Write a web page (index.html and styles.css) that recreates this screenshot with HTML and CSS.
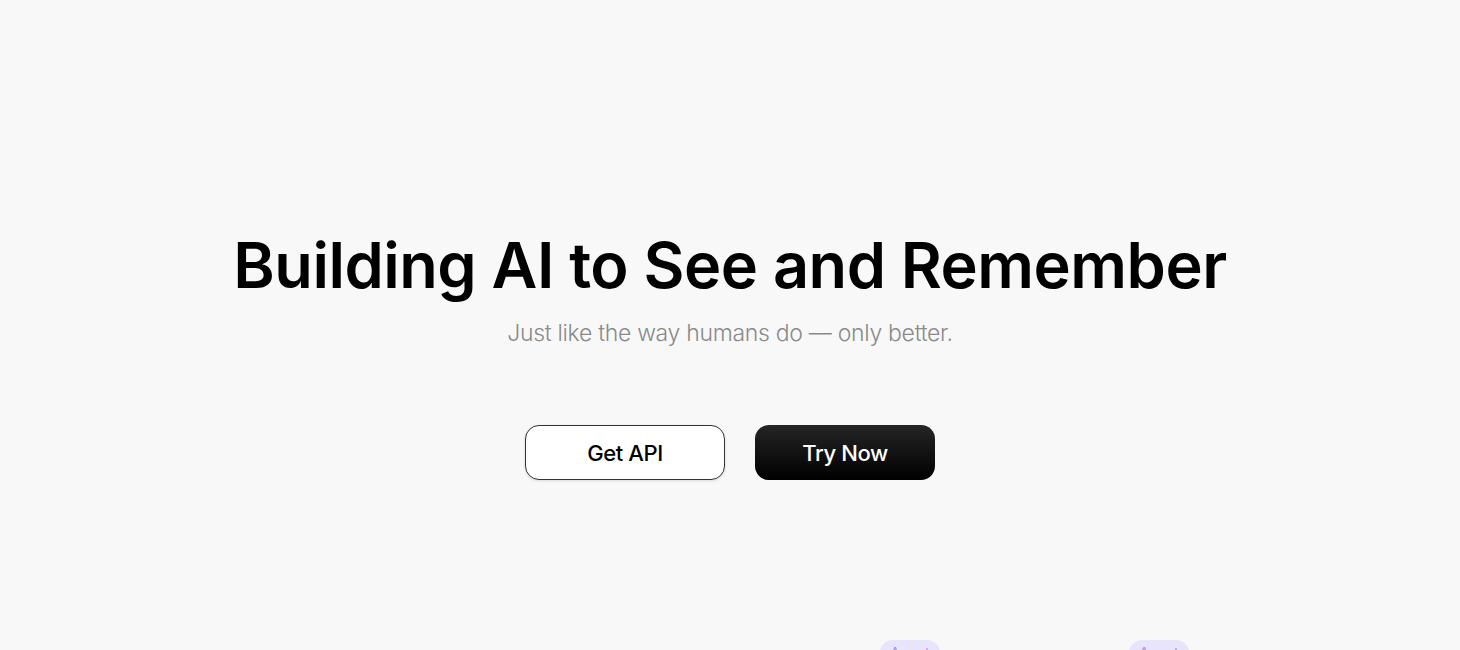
FILE: index.html
```html
<!DOCTYPE html>
<html lang="en">
<head>
    <meta charset="UTF-8">
    <meta name="viewport" content="width=device-width, initial-scale=1.0">
    <title>Building AI to See and Remember</title>
    <link rel="stylesheet" href="styles.css">
</head>
<body>
    <section class="hero">
        <h1>Building AI to See and Remember</h1>
        <p class="tagline">Just like the way humans do — only better.</p>
        <div class="actions">
            <button class="btn btn-outline">Get API</button>
            <button class="btn btn-dark">Try Now</button>
        </div>
    </section>

    <section class="flow">
        <div class="node node-a"><span class="pill">Agent</span></div>
        <div class="node node-b"><span class="pill">Agent</span></div>
    </section>
</body>
</html>
```

FILE: styles.css
```css
body {
    margin: 0;
    background-color: #f8f8f8;
    font-family: Inter, "Noto Sans", sans-serif;
    color: #000;
}
.hero {
    display: flex;
    flex-direction: column;
    align-items: center;
    padding-top: 225px;
}
h1 {
    margin: 0;
    font-size: 63px;
    font-weight: 600;
    letter-spacing: -0.5px;
    line-height: 80px;
}
.tagline {
    margin: 14px 0 0;
    font-size: 23px;
    font-weight: 300;
    color: #8a8a8a;
    letter-spacing: -0.3px;
}
.actions {
    display: flex;
    gap: 30px;
    margin-top: 78px;
}
.btn {
    height: 55px;
    border-radius: 14px;
    font-family: Inter, "Noto Sans", sans-serif;
    font-size: 22px;
    font-weight: 500;
    letter-spacing: -0.4px;
    cursor: pointer;
}
.btn-outline {
    width: 200px;
    background-color: #fff;
    color: #000;
    border: 1px solid #333;
    box-shadow: 0 1px 3px rgba(0, 0, 0, 0.12);
}
.btn-dark {
    width: 180px;
    background: linear-gradient(#252525, #000);
    color: #fff;
    border: none;
}
.flow {
    display: flex;
    padding-top: 160px;
    padding-left: 880px;
    gap: 189px;
}
.pill {
    display: inline-block;
    width: 60px;
    height: 26px;
    line-height: 26px;
    border-radius: 13px;
    background-color: #e8e4fc;
    color: #a28ef2;
    font-size: 14px;
    text-align: center;
}
```
